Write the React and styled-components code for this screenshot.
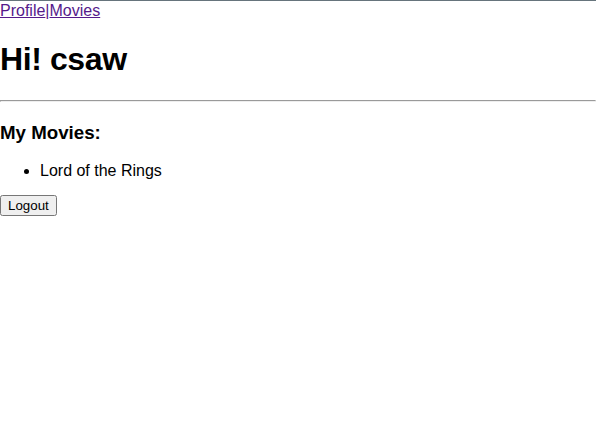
import React from "react";
import styled, { createGlobalStyle } from "styled-components";

const Global = createGlobalStyle`
  body {
    margin: 0;
    font-family: "Liberation Sans", Arial, sans-serif;
    color: #000;
    background: #fff;
  }
`;

const Nav = styled.nav`
  border-top: 1px solid #66747c;
  font-size: 16px;
  line-height: 19px;
`;

const NavLink = styled.a`
  color: #551a8b;
  text-decoration: underline;
`;

const Sep = styled.span`
  color: #551a8b;
`;

const Title = styled.h1`
  font-size: 32px;
  letter-spacing: -0.4px;
  margin: 21.44px 0;
`;

const Rule = styled.hr`
  margin: 8px 0;
`;

const Subtitle = styled.h3`
  font-size: 18.72px;
  line-height: 23.5px;
  margin: 18.72px 0;
`;

const List = styled.ul`
  margin: 16px 0;
  padding-left: 40px;
  font-size: 16px;
  line-height: 16.4px;
`;

const Button = styled.button`
  font-family: "Liberation Sans", Arial, sans-serif;
  font-size: 13.33px;
`;

export default function App() {
  return (
    <>
      <Global />
      <Nav>
        <NavLink href="#profile">Profile</NavLink>
        <Sep>|</Sep>
        <NavLink href="#movies">Movies</NavLink>
      </Nav>
      <Title>Hi! csaw</Title>
      <Rule />
      <Subtitle>My Movies:</Subtitle>
      <List>
        <li>Lord of the Rings</li>
      </List>
      <Button>Logout</Button>
    </>
  );
}
